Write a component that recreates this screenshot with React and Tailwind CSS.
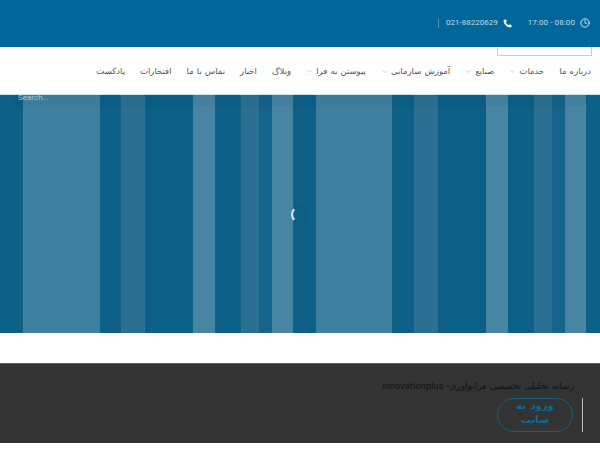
import React from "react";
import { Clock, Phone, ChevronDown } from "lucide-react";

const stripes = [
  ["w-[23px]", "bg-[#0d6088]"],
  ["w-[77px]", "bg-[#3f7f9f]"],
  ["w-[21px]", "bg-[#0d6088]"],
  ["w-[24px]", "bg-[#2b7093]"],
  ["w-[48px]", "bg-[#0c5f87]"],
  ["w-[22px]", "bg-[#4785a3]"],
  ["w-[26px]", "bg-[#0d6088]"],
  ["w-[18px]", "bg-[#2b7093]"],
  ["w-[13px]", "bg-[#14648b]"],
  ["w-[21px]", "bg-[#4785a3]"],
  ["w-[23px]", "bg-[#0d6088]"],
  ["w-[76px]", "bg-[#3f7f9f]"],
  ["w-[22px]", "bg-[#0d6088]"],
  ["w-[24px]", "bg-[#2b7093]"],
  ["w-[48px]", "bg-[#0c5f87]"],
  ["w-[22px]", "bg-[#4785a3]"],
  ["w-[26px]", "bg-[#0d6088]"],
  ["w-[18px]", "bg-[#2b7093]"],
  ["w-[13px]", "bg-[#14648b]"],
  ["w-[21px]", "bg-[#4785a3]"],
  ["w-[14px]", "bg-[#0d6088]"],
];

const nav = [
  ["درباره ما", false],
  ["خدمات", true],
  ["صنایع", true],
  ["آموزش سازمانی", true],
  ["پیوستن به فرا", true],
  ["وبلاگ", false],
  ["اخبار", false],
  ["تماس با ما", false],
  ["افتخارات", false],
  ["پادکست", false],
];

export default function App() {
  return (
    <div dir="ltr" className="w-[600px] h-[450px] overflow-hidden bg-white font-['Roboto','Noto_Sans','DejaVu_Sans',sans-serif]">
      <header className="h-[47px] bg-[#00679a] flex items-center justify-end pr-[10px] pb-[1px] text-[8px] text-[#c5dbe6]">
        <div className="flex items-center h-[10px] border-l border-[#4d94b8] pl-[7px] mr-[5px]">021-88220629</div>
        <Phone className="w-[9px] h-[9px] text-white mr-[16px]" fill="white" strokeWidth={1} />
        <span className="tracking-[0.1px]">17:00 - 08:00</span>
        <Clock className="w-[10px] h-[10px] text-white ml-[5px]" strokeWidth={2} />
      </header>

      <nav dir="rtl" className="relative h-[47px] bg-white flex items-center gap-[15px] pr-[9px] pt-[2px] text-[8.5px] text-[#555] [word-spacing:1px]">
        <div className="absolute top-0 right-[8px] w-[95px] h-[9px] border border-t-0 border-[#ccc] bg-white" />
        {nav.map(([label, hasMenu]) => (
          <div key={label} className="flex items-center gap-[3px] whitespace-nowrap">
            <span>{label}</span>
            {hasMenu && <ChevronDown className="w-[7px] h-[7px] text-[#888]" strokeWidth={1.5} />}
          </div>
        ))}
      </nav>

      <main className="relative h-[239px] overflow-hidden border-t border-[#cfe3ea] bg-[#2b7093]">
        <div className="flex h-full blur-[0.6px]">
          {stripes.map(([width, color], i) => (
            <div key={i} className={`${width} ${color} shrink-0`} />
          ))}
        </div>
        <div className="absolute top-[-6px] left-[12px] w-[576px] h-[18px] rounded-[9px] bg-black/[0.03] pl-[6px] text-[8px] leading-[15px] pt-[1px] text-[#a9c7d5]">
          Search...
        </div>
        <div className="absolute left-[291px] top-[111px] w-[17px] h-[17px] rounded-full border-2 border-[#0c5c83] border-l-[#d4ecf4]" />
      </main>

      <div className="h-[30px] bg-white" />

      <section dir="rtl" className="h-[80px] bg-[#333] border-t border-[#aaa]/40 pr-[26px] pt-[14px]">
        <p className="text-[9px] leading-[16px] text-[#111] tracking-[0.2px] [word-spacing:1px]">رسانه تحلیلی تخصصی فرانوآوری- innovationplus</p>
        <div className="flex items-stretch mt-[4px] -mr-[9px]">
          <div className="w-[1px] h-[34px] bg-[#bbb]" />
          <div className="w-[76px] h-[34px] mr-[9px] rounded-[17px] border-[1.5px] border-[#14607f] text-center text-[10px] leading-[14px] px-[18px] text-[#0a6c9e] font-bold [word-spacing:2px]">
            ورود به سایت
          </div>
        </div>
      </section>
    </div>
  );
}
